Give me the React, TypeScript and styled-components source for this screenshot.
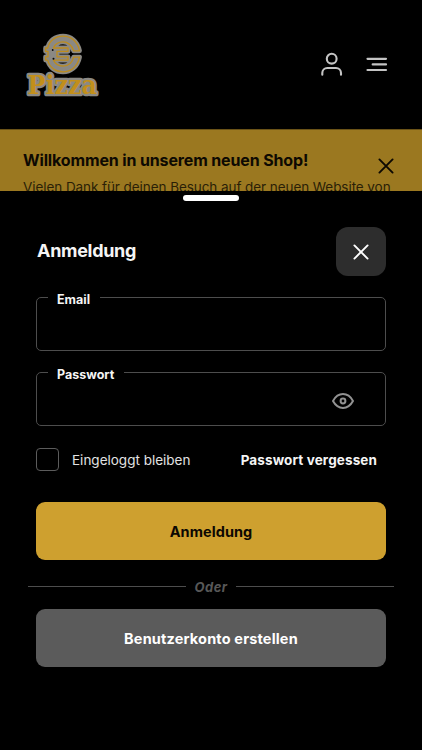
import React from 'react';
import styled, { createGlobalStyle } from 'styled-components';

const Global = createGlobalStyle`
  * { box-sizing: border-box; }
  body { margin: 0; background: #000; font-family: Inter, "Liberation Sans", sans-serif; }
  button, input { font-family: inherit; }
`;

const Screen = styled.div`
  width: 422px;
  height: 750px;
  overflow: hidden;
  display: flex;
  flex-direction: column;
  background: #000;
`;

const Header = styled.header`
  height: 129px;
  flex: none;
  display: flex;
  align-items: center;
  justify-content: space-between;
  padding: 0 32px 0 20px;
`;

const Nav = styled.nav`
  display: flex;
  gap: 19px;
`;

const IconButton = styled.button`
  width: 26px;
  height: 26px;
  padding: 0;
  border: 0;
  background: none;
  display: grid;
  place-items: center;
  color: #c4c4c4;
`;

const Banner = styled.section`
  height: 62px;
  flex: none;
  overflow: hidden;
  border-top: 1px solid #6b5317;
  padding: 19px 0 0 23px;
  background: #9b7820;
  color: #0d0902;
`;

const BannerCopy = styled.div`
  width: 371px;
  white-space: nowrap;
`;

const BannerTop = styled.div`
  display: flex;
  justify-content: space-between;
  height: 29px;
`;

const BannerTitle = styled.h2`
  margin: 0;
  font-size: 16px;
  line-height: 22px;
  font-weight: 700;
  letter-spacing: -0.14px;
`;

const BannerText = styled.p`
  margin: 0;
  font-size: 13.5px;
  line-height: 18px;
  letter-spacing: -0.07px;
  color: #2a1f07;
`;

const BannerClose = styled.button`
  width: 16px;
  height: 16px;
  margin: 9px 0 0;
  padding: 0;
  border: 0;
  background: none;
  color: #0d0902;
  display: grid;
`;

const Sheet = styled.main`
  flex: 1;
  background: #000;
  padding: 4px 36px 0;
  display: flex;
  flex-direction: column;
`;

const Handle = styled.div`
  width: 56px;
  height: 6px;
  border-radius: 3px;
  background: #fff;
  align-self: center;
  flex: none;
`;

const SheetHeader = styled.div`
  margin-top: 26px;
  height: 49px;
  display: flex;
  justify-content: space-between;
  align-items: center;
`;

const Title = styled.h1`
  margin: 0;
  padding: 0 0 2px 1px;
  font-size: 18px;
  line-height: 24px;
  font-weight: 700;
  letter-spacing: -0.3px;
  color: #f5f5f5;
`;

const CloseButton = styled.button`
  width: 50px;
  height: 49px;
  border: 0;
  padding: 0;
  border-radius: 12px;
  background: #2d2d2d;
  color: #fff;
  display: grid;
  place-items: center;
`;

const Field = styled.fieldset`
  min-width: 0;
  height: 61px;
  margin: 14px 0 0;
  padding: 0 30px 0 11px;
  border: 1px solid #4d4d4d;
  border-radius: 5px;
`;

const Legend = styled.legend`
  padding: 6px 10px 0 9px;
  font-size: 12.5px;
  line-height: 8px;
  font-weight: 700;
  letter-spacing: 0px;
  color: #f5f5f5;
`;

const FieldRow = styled.div`
  display: flex;
  align-items: center;
  height: 44px;
`;

const Input = styled.input`
  flex: 1;
  min-width: 0;
  height: 36px;
  border: 0;
  outline: 0;
  background: transparent;
  color: #f5f5f5;
`;

const EyeButton = styled(IconButton)`
  width: 24px;
  height: 24px;
  color: #929292;
`;

const Options = styled.div`
  margin-top: 22px;
  height: 23px;
  display: flex;
  align-items: center;
  justify-content: space-between;
  padding-right: 9px;
`;

const Remember = styled.label`
  display: flex;
  align-items: center;
  gap: 13px;
  font-size: 13.5px;
  letter-spacing: 0px;
  color: #e2e2e2;
`;

const Checkbox = styled.input`
  appearance: none;
  width: 23px;
  height: 23px;
  margin: 0;
  border: 1px solid #5c5c5c;
  border-radius: 4px;
`;

const Forgot = styled.a`
  font-size: 13.5px;
  font-weight: 700;
  letter-spacing: 0.12px;
  color: #f5f5f5;
`;

const Action = styled.button<{ $primary?: boolean }>`
  height: 58px;
  flex: none;
  border: 0;
  padding: 0;
  border-radius: 9px;
  margin-top: ${(p) => (p.$primary ? 31 : 0)}px;
  background: ${(p) => (p.$primary ? '#cea02f' : '#5b5b5b')};
  color: ${(p) => (p.$primary ? '#0c0802' : '#fff')};
  font-size: 14.5px;
  font-weight: 700;
  letter-spacing: ${(p) => (p.$primary ? 0.08 : 0.17)}px;
`;

const Divider = styled.div`
  height: 49px;
  margin: 0 -8px;
  padding-top: 4px;
  display: flex;
  align-items: center;
  gap: 9px;
  font-size: 13px;
  line-height: 16px;
  font-weight: 700;
  font-style: italic;
  letter-spacing: 0.4px;
  color: #585858;
  &::before, &::after {
    content: '';
    flex: 1;
    height: 1px;
    background: #4d4d4d;
  }
`;

const Cross = ({ size, width }: { size: number; width: number }) => (
  <svg width={size} height={size} viewBox="0 0 16 16" fill="none" stroke="currentColor" strokeWidth={width} strokeLinecap="round">
    <path d="M1.4 1.4 14.6 14.6M14.6 1.4 1.4 14.6" />
  </svg>
);

const euroOutline =
  'M79.5 50.3C77.5 40.5 70.5 35.7 63 35.7S49.5 40 47.7 47.5H45.6V50.8H48V56.3H45.6V59.6H47.7C49.5 67 55.5 71.3 63 71.3S77.5 66.5 79.5 56.7H73.6C72.2 62.5 68 65.6 63 65.6S55 63.5 53.4 59.6H68V56.3H57V50.800H68V47.500H53.400C55 43.500 58.500 41.400 63 41.400S72.200 44.500 73.600 50.300Z';

const Logo = () => (
  <svg width="84" height="84" viewBox="20 22.5 84 84" overflow="visible" role="img" aria-label="Pizza" fill="none">
    <path d={euroOutline} fill="#8b8984" stroke="#8b8984" strokeWidth="4.8" strokeLinejoin="round" />
    <path d={euroOutline} stroke="#bd8c1c" strokeWidth="1.3" strokeLinejoin="round" />
    <circle cx="52.7" cy="49.5" r="0.9" fill="#080808" />
    <circle cx="53.5" cy="58.3" r="1" fill="#080808" />
    <text x="27.5" y="93.4" textLength="69.5" lengthAdjust="spacingAndGlyphs" fontFamily="DejaVu Serif, serif" fontWeight="700" fontSize="25.5" fill="#c28f1b" stroke="#8b8984" strokeWidth="4.6" strokeLinejoin="round" paintOrder="stroke">Pizza</text>
  </svg>
);

export default function App() {
  return (
    <>
      <Global />
      <Screen>
        <Header>
          <Logo />
          <Nav>
            <IconButton aria-label="Konto">
              <svg width="26" height="26" viewBox="0 0 26 26" fill="none" stroke="currentColor" strokeWidth="2.1" strokeLinecap="round">
                <circle cx="12.7" cy="6.7" r="4.9" />
                <path d="M3.3 22.8V21A5 5 0 0 1 8.3 16H17A5 5 0 0 1 22 21V22.8" />
              </svg>
            </IconButton>
            <IconButton aria-label="Menü">
              <svg width="26" height="26" viewBox="0 0 26 26" fill="none" stroke="currentColor" strokeWidth="2.2" strokeLinecap="round">
                <path d="M3.5 6.8H22M8.7 12.4H22M3.5 18H22" />
              </svg>
            </IconButton>
          </Nav>
        </Header>
        <Banner>
          <BannerCopy>
            <BannerTop>
              <BannerTitle>Willkommen in unserem neuen Shop!</BannerTitle>
              <BannerClose aria-label="Hinweis schließen"><Cross size={16} width={1.9} /></BannerClose>
            </BannerTop>
            <BannerText>Vielen Dank für deinen Besuch auf der neuen Website von</BannerText>
          </BannerCopy>
        </Banner>
        <Sheet>
          <Handle />
          <SheetHeader>
            <Title>Anmeldung</Title>
            <CloseButton aria-label="Schließen"><Cross size={16} width={1.9} /></CloseButton>
          </SheetHeader>
          <Field>
            <Legend>Email</Legend>
            <FieldRow><Input type="email" aria-label="Email" /></FieldRow>
          </Field>
          <Field>
            <Legend>Passwort</Legend>
            <FieldRow>
              <Input type="password" aria-label="Passwort" />
              <EyeButton aria-label="Passwort anzeigen">
                <svg width="24" height="24" viewBox="0 0 24 24" fill="none" stroke="currentColor" strokeWidth="2">
                  <path d="M2 12C4.5 7.5 7.5 5.1 12 5.1S19.5 7.5 22 12C19.5 16.5 16.5 18.9 12 18.9S4.5 16.5 2 12Z" strokeLinejoin="round" />
                  <circle cx="12" cy="12" r="2.4" />
                </svg>
              </EyeButton>
            </FieldRow>
          </Field>
          <Options>
            <Remember><Checkbox type="checkbox" />Eingeloggt bleiben</Remember>
            <Forgot>Passwort vergessen</Forgot>
          </Options>
          <Action $primary>Anmeldung</Action>
          <Divider>Oder</Divider>
          <Action>Benutzerkonto erstellen</Action>
        </Sheet>
      </Screen>
    </>
  );
}
